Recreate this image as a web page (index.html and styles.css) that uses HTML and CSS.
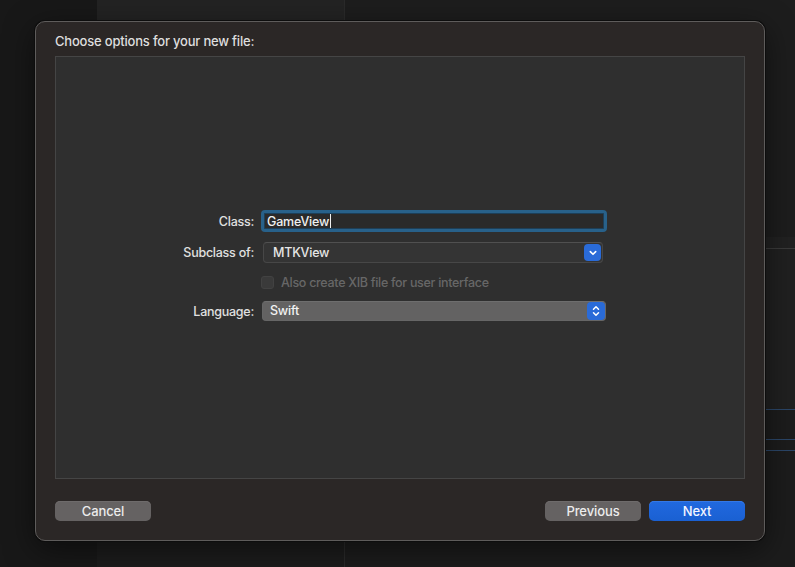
FILE: index.html
```html
<!DOCTYPE html>
<html>
<head>
<meta charset="utf-8">
<link rel="stylesheet" href="styles.css">
</head>
<body>
<div class="desktop">
  <div class="col-left"></div>
  <div class="col-mid"></div>
  <div class="col-right">
    <div class="r-top"></div>
    <div class="r-band"></div>
    <div class="r-line"></div>
    <div class="r-body"></div>
    <div class="r-blue"></div>
    <div class="r-gap1"></div>
    <div class="r-blue"></div>
    <div class="r-gap2"></div>
    <div class="r-blue"></div>
    <div class="r-rest"></div>
  </div>
</div>

<div class="sheet">
  <div class="sheet-title">Choose options for your new file:</div>
  <div class="panel">
    <div class="form">
      <div class="row row-class">
        <div class="label">Class:</div>
        <div class="field focused"><span class="value">GameView</span><span class="caret"></span></div>
      </div>

      <div class="row row-sub">
        <div class="label">Subclass of:</div>
        <div class="popup">
          <span class="popup-text">MTKView</span>
          <span class="popup-btn">
            <svg width="10" height="8" viewBox="0 0 10 8"><path d="M2.3 2.6 L5 5.3 L7.7 2.6" fill="none" stroke="#fff" stroke-width="1.6" stroke-linecap="round" stroke-linejoin="round"/></svg>
          </span>
        </div>
      </div>

      <div class="row row-check">
        <div class="label"></div>
        <div class="check-row">
          <span class="checkbox"></span>
          <span class="check-text">Also create XIB file for user interface</span>
        </div>
      </div>

      <div class="row row-lang">
        <div class="label">Language:</div>
        <div class="popup light">
          <span class="popup-text">Swift</span>
          <span class="popup-btn stepper">
            <svg width="10" height="14" viewBox="0 0 10 14"><path d="M2.5 5.2 L5 2.7 L7.5 5.2" fill="none" stroke="#fff" stroke-width="1.5" stroke-linecap="round" stroke-linejoin="round"/><path d="M2.5 8.8 L5 11.3 L7.5 8.8" fill="none" stroke="#fff" stroke-width="1.5" stroke-linecap="round" stroke-linejoin="round"/></svg>
          </span>
        </div>
      </div>
    </div>
  </div>
  <div class="buttons">
    <div class="btn">Cancel</div>
    <div class="spacer"></div>
    <div class="btn">Previous</div>
    <div class="btn primary">Next</div>
  </div>
</div>
</body>
</html>
```

FILE: styles.css
```css
html, body {
  margin: 0;
  padding: 0;
  width: 795px;
  height: 567px;
  overflow: hidden;
  background: #1b1b1b;
  font-family: "Inter", "Liberation Sans", sans-serif;
  font-size: 13px;
}

* { box-sizing: border-box; }

.desktop {
  display: flex;
  width: 795px;
  height: 567px;
}

.col-left {
  width: 97px;
  background: #181818;
}

.col-mid {
  width: 248px;
  background: linear-gradient(#232323 0, #232323 40px, #1c1c1c 520px);
  border-right: 1px solid #2a2a2a;
}

.col-right {
  flex: 1;
  display: flex;
  flex-direction: column;
  background: #1d1d1d;
}

.r-top { height: 237px; background: #1d1d1d; }
.r-band { height: 11px; background: #212121; }
.r-line { height: 1px; background: #3a3a3a; }
.r-body { height: 160px; background: #202020; }
.r-blue { height: 1px; background: #2b4668; }
.r-gap1 { height: 29px; background: #1c1c1c; }
.r-gap2 { height: 10px; background: #1c1c1c; }
.r-rest { flex: 1; background: #1c1c1c; }

.sheet {
  position: absolute;
  left: 35px;
  top: 21px;
  width: 730px;
  height: 520px;
  background: #2b2726;
  border: 1px solid #5e5c5b;
  border-radius: 10px;
  box-shadow: 0 0 0 1px #0d0d0d, 0 8px 30px rgba(0,0,0,0.5);
  padding: 0 19px;
  display: flex;
  flex-direction: column;
}

.sheet-title {
  color: #dedede;
  line-height: 16px;
  padding-top: 11px;
  height: 26px;
  margin-bottom: 8px;
  font-weight: 500;
  letter-spacing: -0.2px;
}

.panel {
  height: 423px;
  background: #2f2f2f;
  border: 1px solid #454545;
}

.form {
  display: flex;
  flex-direction: column;
  margin-top: 153px;
}

.row {
  display: flex;
  align-items: center;
  gap: 7px;
}

.row-class { height: 22px; }
.row-sub { height: 21px; margin-top: 10px; }
.row-check { height: 13px; margin-top: 13px; }
.row-lang { height: 20px; margin-top: 12px; }

.label {
  width: 198px;
  text-align: right;
  color: #e0e0e0;
  font-size: 12.5px;
  font-weight: 500;
  letter-spacing: -0.25px;
}

.field {
  width: 346px;
  height: 22px;
  border: 3px solid #28618a;
  border-radius: 4px;
  background: #2a2a2a;
  box-shadow: inset 0 0 0 1px #1d3f58;
  display: flex;
  align-items: center;
  padding-left: 3px;
  color: #f0f0f0;
  font-size: 12.5px;
  font-weight: 500;
  letter-spacing: -0.2px;
}

.caret {
  display: inline-block;
  width: 1px;
  height: 14px;
  background: #f0f0f0;
  margin-left: 1px;
}

.popup {
  height: 21px;
  margin-left: 2px;
  width: 340px;
  background: #343434;
  border: 1px solid #474747;
  border-top-color: #505050;
  border-radius: 4px;
  display: flex;
  align-items: center;
  justify-content: space-between;
  color: #e6e6e6;
  font-size: 12.5px;
  font-weight: 500;
  letter-spacing: -0.2px;
}

.popup-text {
  padding-left: 9px;
}

.popup-btn {
  width: 17px;
  height: 17px;
  margin-right: 1px;
  background: #2a6bd8;
  border-radius: 4px;
  display: flex;
  align-items: center;
  justify-content: center;
}

.popup.light {
  margin-left: 1px;
  width: 344px;
  height: 20px;
  background: #636262;
  border-color: #666;
  border-top-color: #6e6e6e;
  color: #f2f2f2;
}

.popup.light .popup-text {
  padding-left: 7px;
  margin-top: -2px;
}

.popup-btn.stepper {
  width: 18px;
  height: 18px;
  margin-right: 0;
}

.check-row {
  display: flex;
  align-items: center;
  gap: 7px;
  height: 13px;
}

.checkbox {
  width: 13px;
  height: 13px;
  background: #3a3a3a;
  border: 1px solid #424242;
  border-radius: 3px;
}

.check-text {
  color: #676767;
  font-size: 12.5px;
  font-weight: 500;
  letter-spacing: -0.3px;
}

.buttons {
  display: flex;
  gap: 8px;
  margin-top: 22px;
}

.spacer { flex: 1; }

.btn {
  width: 96px;
  height: 20px;
  border-radius: 5px;
  background: #656262;
  color: #ececec;
  font-weight: 500;
  letter-spacing: -0.1px;
  display: flex;
  align-items: center;
  justify-content: center;
  box-shadow: inset 0 1px 0 #6e6b6b;
}

.btn.primary {
  background: linear-gradient(#2169df, #1a60d2);
  color: #f4f6ff;
  box-shadow: inset 0 1px 0 #3478e6;
}
```
